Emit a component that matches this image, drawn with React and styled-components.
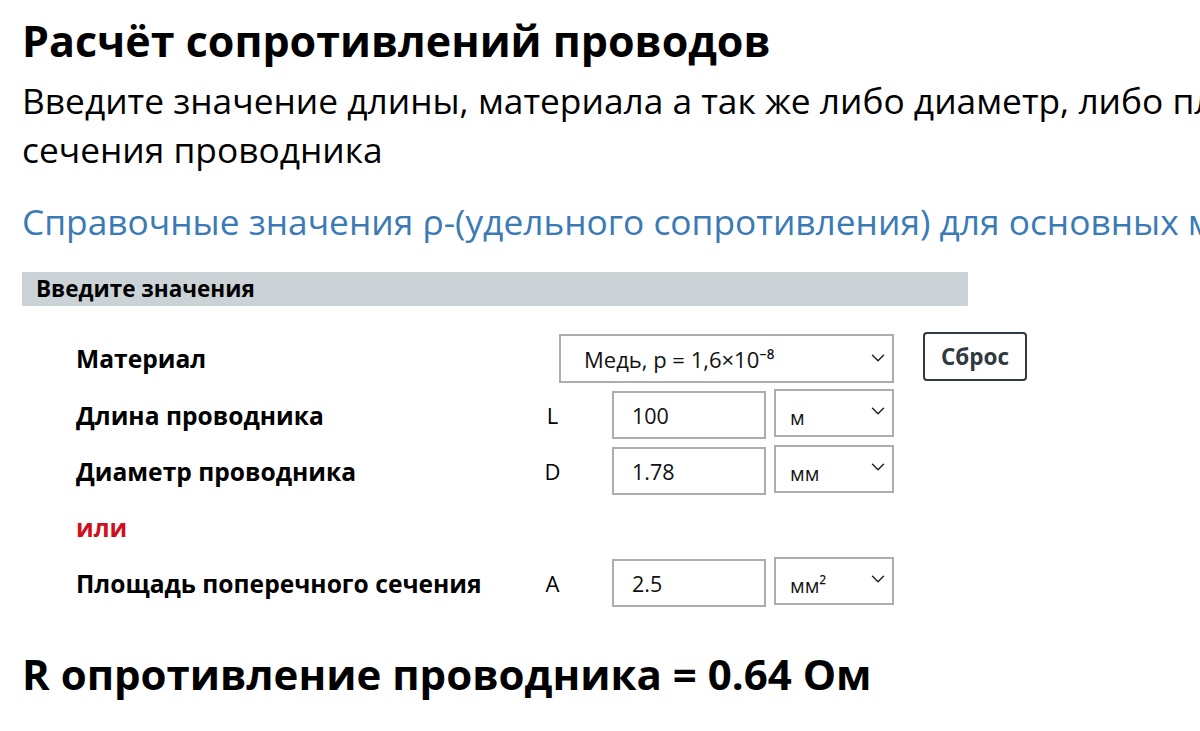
import React from "react";
import styled, { createGlobalStyle } from "styled-components";
import { ChevronDown } from "lucide-react";

const GlobalStyle = createGlobalStyle`
  html, body {
    margin: 0;
    padding: 0;
    background: #fff;
    overflow: hidden;
  }
  body {
    font-family: "Open Sans", "Noto Sans", sans-serif;
    color: #000;
  }
`;

const Page = styled.div`
  width: 2000px;
  padding: 12px 22px 40px;
`;

const Title = styled.h1`
  margin: 0;
  font-size: 43px;
  font-weight: 700;
  line-height: 58px;
`;

const Lead = styled.p`
  margin: 6px 0 0;
  font-size: 35.3px;
  line-height: 49px;
  white-space: nowrap;
`;

const RefLink = styled.a`
  display: block;
  margin-top: 23px;
  font-size: 35.3px;
  line-height: 49px;
  color: #3a7bb6;
  text-decoration: none;
  white-space: nowrap;
`;

const SectionBar = styled.div`
  margin-top: 26px;
  width: 946px;
  height: 34px;
  box-sizing: border-box;
  padding: 0 14px;
  background: #cbd3d6;
  font-size: 22.5px;
  font-weight: 700;
  line-height: 34px;
`;

const Form = styled.div`
  display: grid;
  grid-template-columns: 454px 45px 37px 154px 8px 120px 29px 104px;
  grid-template-rows: 49px;
  grid-auto-rows: 48px;
  row-gap: 8px;
  margin: 28px 0 0 54px;
  align-items: center;
`;

const Label = styled.div`
  grid-column: 1;
  font-size: 24.6px;
  font-weight: 700;
  white-space: nowrap;
  color: ${(p) => (p.$accent ? "#d0101c" : "#000")};
`;

const Symbol = styled.div`
  grid-column: 2;
  text-align: center;
  font-size: 22px;
`;

const NumberInput = styled.input`
  grid-column: 4;
  box-sizing: border-box;
  width: 154px;
  height: 48px;
  border: 2px solid #adadad;
  padding: 0 18px;
  font-family: inherit;
  font-size: 21.5px;
  color: #111;
  outline: none;
  background: #fff;
`;

const SelectWrap = styled.div`
  position: relative;
  grid-column: ${(p) => p.$col};
  justify-self: end;
  width: ${(p) => p.$w}px;
  height: ${(p) => p.$h}px;
  align-self: ${(p) => (p.$raise ? "start" : "center")};
  margin-top: ${(p) => (p.$raise ? "-2px" : "0")};
`;

const Select = styled.select`
  appearance: none;
  -webkit-appearance: none;
  box-sizing: border-box;
  width: 100%;
  height: 100%;
  border: 2px solid #adadad;
  border-radius: 0;
  background: #fff;
  padding: ${(p) => p.$pad};
  font-family: inherit;
  font-size: ${(p) => p.$size || 20}px;
  color: #111;
  outline: none;
`;

const Chevron = styled(ChevronDown)`
  position: absolute;
  right: 5px;
  top: ${(p) => p.$top}px;
  color: #222;
  pointer-events: none;
`;

const ResetButton = styled.button`
  grid-column: 8;
  box-sizing: border-box;
  width: 104px;
  height: 49px;
  margin-top: -4px;
  border: 2px solid #2f3a40;
  border-radius: 4px;
  background: #fff;
  font-family: inherit;
  font-size: 22.5px;
  font-weight: 700;
  color: #2f3a40;
  cursor: pointer;
`;

const Spacer = styled.div`
  grid-column: 2 / 9;
`;

const Result = styled.h2`
  margin: 38px 0 0;
  font-size: 42px;
  font-weight: 700;
  line-height: 57px;
`;

function UnitSelect({ value, options }) {
  return (
    <SelectWrap $col={6} $w={120} $h={48} $raise>
      <Select $pad="9px 14px 0" defaultValue={value}>
        {options.map((o) => (
          <option key={o}>{o}</option>
        ))}
      </Select>
      <Chevron size={22} strokeWidth={1.6} $top={11} />
    </SelectWrap>
  );
}

export default function App() {
  return (
    <>
      <GlobalStyle />
      <Page>
        <Title>Расчёт сопротивлений проводов</Title>
        <Lead>
          Введите значение длины, материала а так же либо диаметр, либо площадь поперечного
          <br />
          сечения проводника
        </Lead>
        <RefLink href="#">
          Справочные значения ρ-(удельного сопротивления) для основных материалов
        </RefLink>
        <SectionBar>Введите значения</SectionBar>
        <Form>
          <Label>Материал</Label>
          <SelectWrap $col="2 / 7" $w={335} $h={49}>
            <Select $pad="0 40px 0 23px" $size={22} defaultValue="cu">
              <option value="cu">Медь, р = 1,6×10⁻⁸</option>
              <option value="al">Алюминий, р = 2,8×10⁻⁸</option>
            </Select>
            <Chevron size={22} strokeWidth={1.6} $top={13} />
          </SelectWrap>
          <ResetButton>Сброс</ResetButton>

          <Label>Длина проводника</Label>
          <Symbol>L</Symbol>
          <NumberInput defaultValue="100" />
          <UnitSelect value="м" options={["м", "км", "см"]} />

          <Label>Диаметр проводника</Label>
          <Symbol>D</Symbol>
          <NumberInput defaultValue="1.78" />
          <UnitSelect value="мм" options={["мм", "см", "м"]} />

          <Label $accent>или</Label>
          <Spacer />

          <Label>Площадь поперечного сечения</Label>
          <Symbol>A</Symbol>
          <NumberInput defaultValue="2.5" />
          <UnitSelect value="мм²" options={["мм²", "см²", "м²"]} />
        </Form>
        <Result>R опротивление проводника = 0.64 Ом</Result>
      </Page>
    </>
  );
}
